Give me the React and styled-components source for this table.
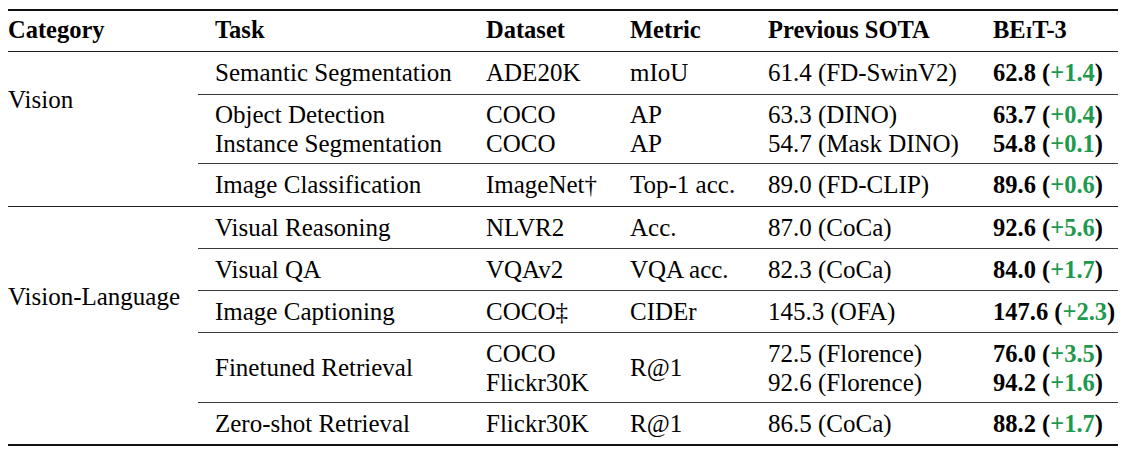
import React from 'react';
import styled, { createGlobalStyle } from 'styled-components';

const GlobalStyle = createGlobalStyle`
    html, body{
        margin: 0;
        padding: 0;
        background: #ffffff;
    }
`;

const COLUMNS = '271px 144px 138px 225px 142px';

const TableContainer = styled.div`
    margin: 9px 0 0 8px;
    width: 1110px;
    font-family: "Liberation Serif", "Times New Roman", serif;
    font-size: 25px;
    color: #000000;
    border-top: 2px solid #111111;
    border-bottom: 2px solid #111111;
`;

const HeaderRow = styled.div`
    display: grid;
    grid-template-columns: 190px ${COLUMNS};
    height: 41px;
    padding-bottom: 3px;
    box-sizing: border-box;
    align-items: center;
    border-bottom: 1px solid #222222;
    font-size: 24.5px;
    font-weight: 700;
    line-height: 28px;
`;

const HeadCell = styled.div`
    padding-left: ${props => props.first ? '0' : '17px'};
    white-space: nowrap;
`;

const SmallCap = styled.span`
    font-variant: small-caps;
`;

const Group = styled.div`
    display: flex;
    border-top: ${props => props.first ? 'none' : '1px solid #222222'};
`;

const CategoryCell = styled.div`
    width: 190px;
    flex: none;
    padding-top: ${props => props.offset}px;
    line-height: 28px;
    white-space: nowrap;
`;

const Rows = styled.div`
    flex: 1;
`;

const Row = styled.div`
    display: grid;
    grid-template-columns: ${COLUMNS};
    height: ${props => props.height}px;
    border-top: ${props => props.first ? 'none' : '1px solid #3a3a3a'};
    line-height: ${props => props.tall ? '29px' : '28px'};
`;

const Cell = styled.div`
    display: flex;
    flex-direction: column;
    justify-content: center;
    padding-left: 17px;
    white-space: nowrap;
`;

const Score = styled.span`
    font-size: 24.5px;
    font-weight: 700;
`;

const Gain = styled.span`
    color: #1e9a4e;
`;

const groups = [
    {
        category: 'Vision',
        offset: 34,
        single: 42,
        double: 68,
        rows: [
            { task: ['Semantic Segmentation'], dataset: ['ADE20K'], metric: ['mIoU'], prev: ['61.4 (FD-SwinV2)'], ours: [['62.8', '+1.4']] },
            { task: ['Object Detection', 'Instance Segmentation'], dataset: ['COCO', 'COCO'], metric: ['AP', 'AP'], prev: ['63.3 (DINO)', '54.7 (Mask DINO)'], ours: [['63.7', '+0.4'], ['54.8', '+0.1']] },
            { task: ['Image Classification'], dataset: ['ImageNet†'], metric: ['Top-1 acc.'], prev: ['89.0 (FD-CLIP)'], ours: [['89.6', '+0.6']] },
        ],
    },
    {
        category: 'Vision-Language',
        offset: 76,
        single: 41,
        double: 69,
        rows: [
            { task: ['Visual Reasoning'], dataset: ['NLVR2'], metric: ['Acc.'], prev: ['87.0 (CoCa)'], ours: [['92.6', '+5.6']] },
            { task: ['Visual QA'], dataset: ['VQAv2'], metric: ['VQA acc.'], prev: ['82.3 (CoCa)'], ours: [['84.0', '+1.7']] },
            { task: ['Image Captioning'], dataset: ['COCO‡'], metric: ['CIDEr'], prev: ['145.3 (OFA)'], ours: [['147.6', '+2.3']] },
            { task: ['Finetuned Retrieval'], dataset: ['COCO', 'Flickr30K'], metric: ['R@1'], prev: ['72.5 (Florence)', '92.6 (Florence)'], ours: [['76.0', '+3.5'], ['94.2', '+1.6']] },
            { task: ['Zero-shot Retrieval'], dataset: ['Flickr30K'], metric: ['R@1'], prev: ['86.5 (CoCa)'], ours: [['88.2', '+1.7']] },
        ],
    },
];

const Lines = ({ items }) => (
    <Cell>
        {items.map((item, i) => <div key={i}>{item}</div>)}
    </Cell>
);

const App = () => {
    return (
        <>
            <GlobalStyle />
            <TableContainer>
                <HeaderRow>
                    <HeadCell first>Category</HeadCell>
                    <HeadCell>Task</HeadCell>
                    <HeadCell>Dataset</HeadCell>
                    <HeadCell>Metric</HeadCell>
                    <HeadCell>Previous SOTA</HeadCell>
                    <HeadCell>BE<SmallCap>i</SmallCap>T-3</HeadCell>
                </HeaderRow>
                {groups.map((group, g) => (
                    <Group key={group.category} first={g === 0}>
                        <CategoryCell offset={group.offset}>{group.category}</CategoryCell>
                        <Rows>
                            {group.rows.map((row, r) => {
                                const tall = row.ours.length > 1;
                                return (
                                    <Row key={r} first={r === 0} tall={tall} height={tall ? group.double : group.single}>
                                        <Lines items={row.task} />
                                        <Lines items={row.dataset} />
                                        <Lines items={row.metric} />
                                        <Lines items={row.prev} />
                                        <Lines items={row.ours.map(([score, gain]) => (
                                            <Score>{score} (<Gain>{gain}</Gain>)</Score>
                                        ))} />
                                    </Row>
                                );
                            })}
                        </Rows>
                    </Group>
                ))}
            </TableContainer>
        </>
    );
};

export default App;
